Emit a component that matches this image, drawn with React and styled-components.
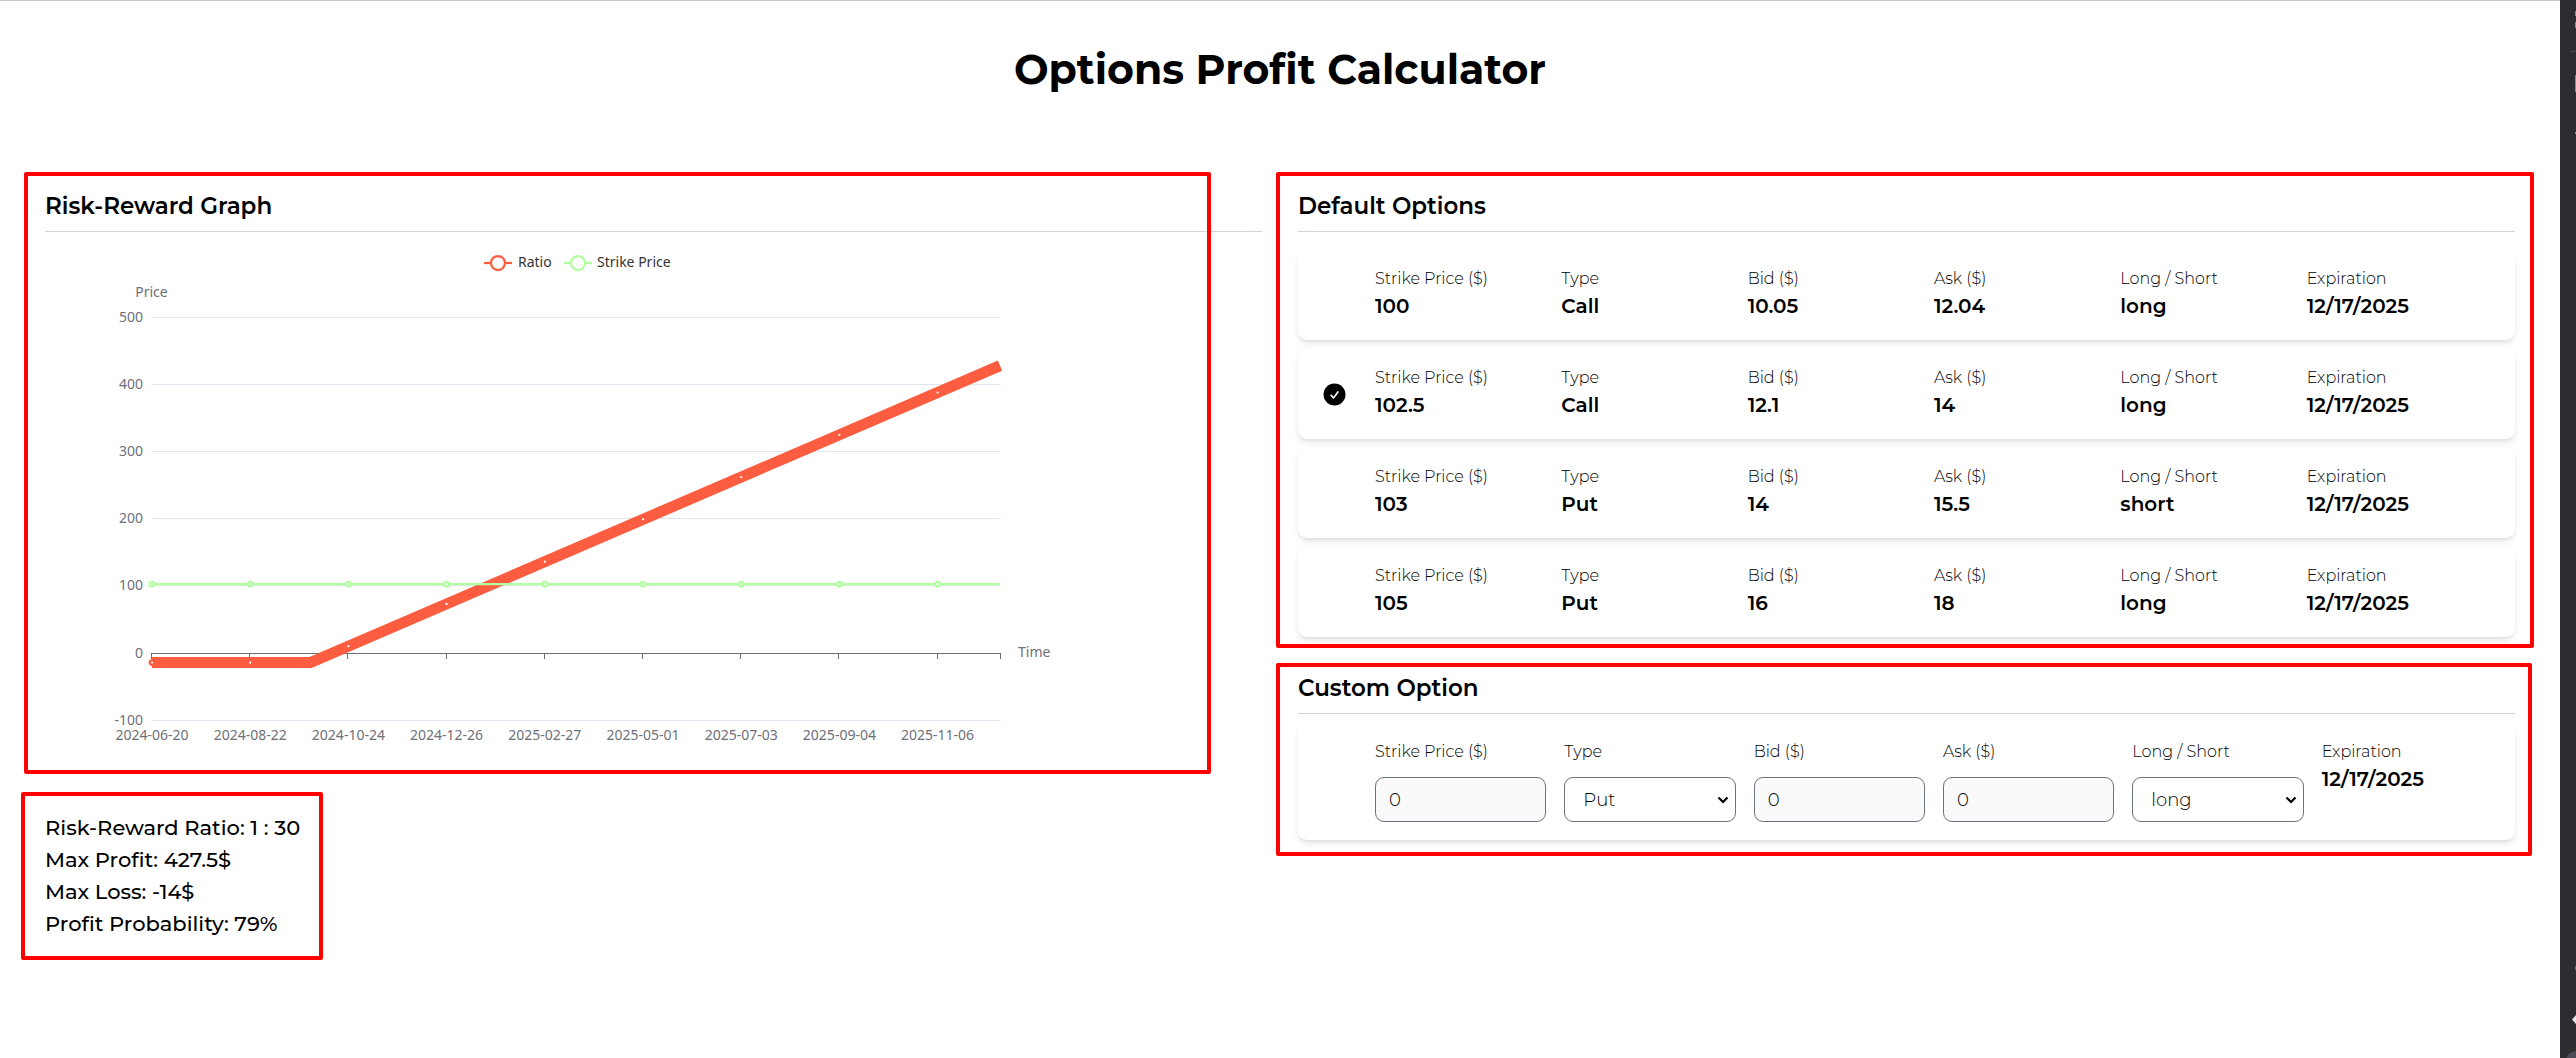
import React, { useState } from "react";
import styled, { createGlobalStyle } from "styled-components";

const GlobalStyle = createGlobalStyle`
  *, *::before, *::after { box-sizing: border-box; }
  body {
    margin: 0;
    background: #ffffff;
    color: #000000;
    font-family: Montserrat, Inter, sans-serif;
  }
`;

const Shell = styled.div`
  display: flex;
  min-height: 100vh;
`;

const Page = styled.main`
  flex: 1;
  min-width: 0;
  padding: 0 45px 72px;
  border-top: 1px solid #c8c8c8;
`;

const EdgeStrip = styled.div`
  flex: none;
  display: flex;
  flex-direction: column;
  justify-content: space-between;
  width: 16px;
  background: #2b2d31;
`;

const Title = styled.h1`
  margin: 36px 0 89px;
  font-size: 41px;
  line-height: 64px;
  font-weight: 700;
  text-align: center;
`;

const Columns = styled.div`
  display: grid;
  grid-template-columns: 1fr 1fr;
  gap: 36px;
  align-items: start;
`;

const Column = styled.div`
  min-width: 0;
`;

const Panel = styled.section`
  position: relative;
  margin-top: ${(p) => p.$gap || 0}px;
`;

const Outline = styled.div`
  position: absolute;
  inset: ${(p) => p.$inset};
  border: 4px solid #ff0000;
  border-radius: 2px;
  pointer-events: none;
`;

const Heading = styled.h2`
  margin: 0;
  padding-bottom: 9px;
  border-bottom: 1px solid #d1d5db;
  font-size: 23px;
  line-height: 32px;
  font-weight: 600;
`;

const Chart = styled.svg`
  display: block;
  width: 100%;
  max-width: 1061px;
  height: auto;
  margin-top: 18px;
  font-family: "Noto Sans", sans-serif;
  font-size: 14px;
`;

const Stats = styled.section`
  position: relative;
  width: fit-content;
  margin-top: 24px;
`;

const Stat = styled.p`
  margin: 0;
  font-size: 21px;
  line-height: 32px;
  font-weight: 500;
`;

const Stack = styled.div`
  display: flex;
  flex-direction: column;
  gap: 9px;
  margin-top: ${(p) => p.$top}px;
`;

const cardStyle = `
  display: flex;
  gap: 27px;
  width: 100%;
  padding: 18px 22px 18px 23px;
  border: 0;
  border-radius: 9px;
  background: #ffffff;
  box-shadow: 0 4px 7px -1px rgba(0, 0, 0, 0.1), 0 2px 4px -2px rgba(0, 0, 0, 0.1);
  color: inherit;
  font-family: inherit;
  text-align: left;
`;

const OptionCard = styled.button`
  ${cardStyle}
  align-items: center;
  cursor: pointer;
`;

const CustomCard = styled.form`
  ${cardStyle}
`;

const Marker = styled.span`
  flex: none;
  width: 27px;
  height: 27px;
`;

const Fields = styled.span`
  flex: 1;
  display: grid;
  grid-template-columns: repeat(6, minmax(0, 1fr));
  column-gap: ${(p) => p.$gap || 0}px;
`;

const Field = styled.span`
  display: flex;
  flex-direction: column;
`;

const Label = styled.span`
  font-size: 16px;
  line-height: 22px;
  font-weight: 300;
`;

const Value = styled.span`
  font-size: 20px;
  line-height: 32px;
  font-weight: 600;
`;

const controlStyle = `
  width: 100%;
  height: 45px;
  margin: 0;
  border: 1px solid #6b7280;
  border-radius: 9px;
  color: #000000;
  font-family: inherit;
  font-size: 18px;
  font-weight: 300;
`;

const Control = styled.span`
  position: relative;
  display: flex;
  margin-top: 14px;
`;

const NumberInput = styled.input`
  ${controlStyle}
  padding: 0 13px;
  background: #fafafa;
`;

const Select = styled.select`
  ${controlStyle}
  appearance: none;
  padding: 0 27px 0 18px;
  background: #ffffff;
`;

const Arrow = styled.svg`
  position: absolute;
  right: 7px;
  top: 19px;
  pointer-events: none;
`;

const CheckIcon = () => (
  <svg width="27" height="27" viewBox="0 0 24 24" aria-hidden="true">
    <circle cx="12" cy="12" r="9.75" fill="#000000" />
    <path d="M9 12.75 11.25 15 15 9.75" fill="none" stroke="#ffffff" strokeWidth="1.5" strokeLinecap="round" strokeLinejoin="round" />
  </svg>
);

const StripTop = () => (
  <svg width="16" height="140" viewBox="0 0 16 140" aria-hidden="true">
    <rect x="15" y="11" width="1" height="5" fill="#8a8b90" />
    <rect x="15" y="22" width="1" height="6" fill="#8a8b90" />
    <rect x="10" y="51" width="6" height="1" fill="#4a4c51" />
    <rect x="15" y="75" width="1" height="17" fill="#8a8b90" />
    <rect x="15" y="132" width="1" height="2" fill="#8a8b90" />
  </svg>
);

const StripBottom = () => (
  <svg width="16" height="98" viewBox="0 0 16 98" aria-hidden="true">
    <rect x="15" y="6" width="1" height="4" fill="#6a6b70" />
    <path d="M16 55 12 59.5 16 64Z" fill="#e6e6e8" />
    <ellipse cx="16" cy="101" rx="10" ry="10" fill="#4a4b55" />
  </svg>
);

const OPTIONS = [
  { strike: "100", type: "Call", bid: "10.05", ask: "12.04", side: "long" },
  { strike: "102.5", type: "Call", bid: "12.1", ask: "14", side: "long" },
  { strike: "103", type: "Put", bid: "14", ask: "15.5", side: "short" },
  { strike: "105", type: "Put", bid: "16", ask: "18", side: "long" },
];

const EXPIRATION = "12/17/2025";

const DATES = [
  "2024-06-20", "2024-08-22", "2024-10-24", "2024-12-26", "2025-02-27",
  "2025-05-01", "2025-07-03", "2025-09-04", "2025-11-06",
];

const RED = "#fc5d40";
const GREEN = "#b2ff9f";
const AXIS = "#6e7079";
const LEFT = 106.5;
const RIGHT = 955.5;
const STEP = 98.2;
const yOf = (v) => Math.floor(403 - v * 0.671) + 0.5;
const ratioY = (x) => Math.min(412.5, 412.5 - (x - 265.5) * 0.4305);

const LegendMark = ({ x, color }) => (
  <g stroke={color} strokeWidth="2.25" fill="#ffffff">
    <line x1={x} x2={x + 28} y1="13" y2="13" />
    <circle cx={x + 14} cy="13" r="7" />
  </g>
);

const RiskChart = () => {
  const xs = DATES.map((_, i) => LEFT + 0.5 + i * STEP);
  return (
    <Chart viewBox="0 0 1061 538" role="img" aria-label="Risk-Reward Graph">
      <LegendMark x={439} color={RED} />
      <text x="473" y="17" fill="#333333">Ratio</text>
      <LegendMark x={519} color={GREEN} />
      <text x="552" y="17" fill="#333333">Strike Price</text>
      <text x={LEFT} y="47" fill={AXIS} textAnchor="middle">Price</text>
      <text x="973" y="407" fill={AXIS}>Time</text>
      {[500, 400, 300, 200, 100, 0, -100].map((v) => (
        <g key={v}>
          {v !== 0 && <line x1={LEFT} x2={RIGHT} y1={yOf(v)} y2={yOf(v)} stroke="#e0e6f1" />}
          <text x="98" y={yOf(v) + 4} fill={AXIS} textAnchor="end">{v}</text>
        </g>
      ))}
      <g stroke={AXIS}>
        <line x1={LEFT} x2={RIGHT} y1="403.5" y2="403.5" />
        {[...xs.map((x) => Math.round(x) - 0.5), RIGHT].map((x) => (
          <line key={x} x1={x} x2={x} y1="403" y2="409" />
        ))}
      </g>
      {DATES.map((d, i) => (
        <text key={d} x={xs[i]} y="490" fill={AXIS} textAnchor="middle">{d}</text>
      ))}
      <polyline points={`107,412.5 265.5,412.5 955,${ratioY(955)}`} fill="none" stroke={RED} strokeWidth="11" />
      {xs.map((x) => (
        <circle key={x} cx={x} cy={ratioY(x)} r="2.25" fill="#ffffff" stroke={RED} strokeWidth="2.25" />
      ))}
      <line x1="107" x2="955" y1="334.2" y2="334.2" stroke={GREEN} strokeWidth="2.25" />
      {xs.map((x) => (
        <circle key={x} cx={x} cy="334.2" r="2.25" fill="#ffffff" stroke={GREEN} strokeWidth="2.25" />
      ))}
    </Chart>
  );
};

const ReadOnly = ({ label, value }) => (
  <Field>
    <Label>{label}</Label>
    <Value>{value}</Value>
  </Field>
);

const NumberField = ({ id, label }) => (
  <Field>
    <Label as="label" htmlFor={id}>{label}</Label>
    <Control>
      <NumberInput id={id} type="text" inputMode="decimal" defaultValue="0" />
    </Control>
  </Field>
);

const SelectField = ({ id, label, initial, choices }) => (
  <Field>
    <Label as="label" htmlFor={id}>{label}</Label>
    <Control>
      <Select id={id} defaultValue={initial}>
        {choices.map((c) => <option key={c}>{c}</option>)}
      </Select>
      <Arrow width="12" height="8" viewBox="0 0 12 8" aria-hidden="true">
        <path d="M1.5 1.5 6 6 10.5 1.5" fill="none" stroke="#000000" strokeWidth="2.25" />
      </Arrow>
    </Control>
  </Field>
);

export default function App() {
  const [selected, setSelected] = useState(1);
  return (
    <>
      <GlobalStyle />
      <Shell>
        <Page>
          <Title>Options Profit Calculator</Title>
          <Columns>
            <Column>
              <Panel>
                <Heading>Risk-Reward Graph</Heading>
                <RiskChart />
                <Outline $inset="-18px 51px 14px -21px" />
              </Panel>
              <Stats>
                <Stat>Risk-Reward Ratio: 1 : 30</Stat>
                <Stat>Max Profit: 427.5$</Stat>
                <Stat>Max Loss: -14$</Stat>
                <Stat>Profit Probability: 79%</Stat>
                <Outline $inset="-20px -23px -20px -24px" />
              </Stats>
            </Column>
            <Column>
              <Panel>
                <Heading>Default Options</Heading>
                <Stack $top={18}>
                  {OPTIONS.map((o, i) => (
                    <OptionCard key={o.strike} type="button" aria-pressed={i === selected} onClick={() => setSelected(i)}>
                      <Marker>{i === selected && <CheckIcon />}</Marker>
                      <Fields>
                        <ReadOnly label="Strike Price ($)" value={o.strike} />
                        <ReadOnly label="Type" value={o.type} />
                        <ReadOnly label="Bid ($)" value={o.bid} />
                        <ReadOnly label="Ask ($)" value={o.ask} />
                        <ReadOnly label="Long / Short" value={o.side} />
                        <ReadOnly label="Expiration" value={EXPIRATION} />
                      </Fields>
                    </OptionCard>
                  ))}
                </Stack>
                <Outline $inset="-18px -19px -11px -22px" />
              </Panel>
              <Panel $gap={35}>
                <Heading>Custom Option</Heading>
                <Stack $top={9}>
                  <CustomCard>
                    <Marker />
                    <Fields $gap={18}>
                      <NumberField id="strike" label="Strike Price ($)" />
                      <SelectField id="type" label="Type" initial="Put" choices={["Call", "Put"]} />
                      <NumberField id="bid" label="Bid ($)" />
                      <NumberField id="ask" label="Ask ($)" />
                      <SelectField id="side" label="Long / Short" initial="long" choices={["long", "short"]} />
                      <ReadOnly label="Expiration" value={EXPIRATION} />
                    </Fields>
                  </CustomCard>
                </Stack>
                <Outline $inset="-9px -17px -16px -22px" />
              </Panel>
            </Column>
          </Columns>
        </Page>
        <EdgeStrip>
          <StripTop />
          <StripBottom />
        </EdgeStrip>
      </Shell>
    </>
  );
}
